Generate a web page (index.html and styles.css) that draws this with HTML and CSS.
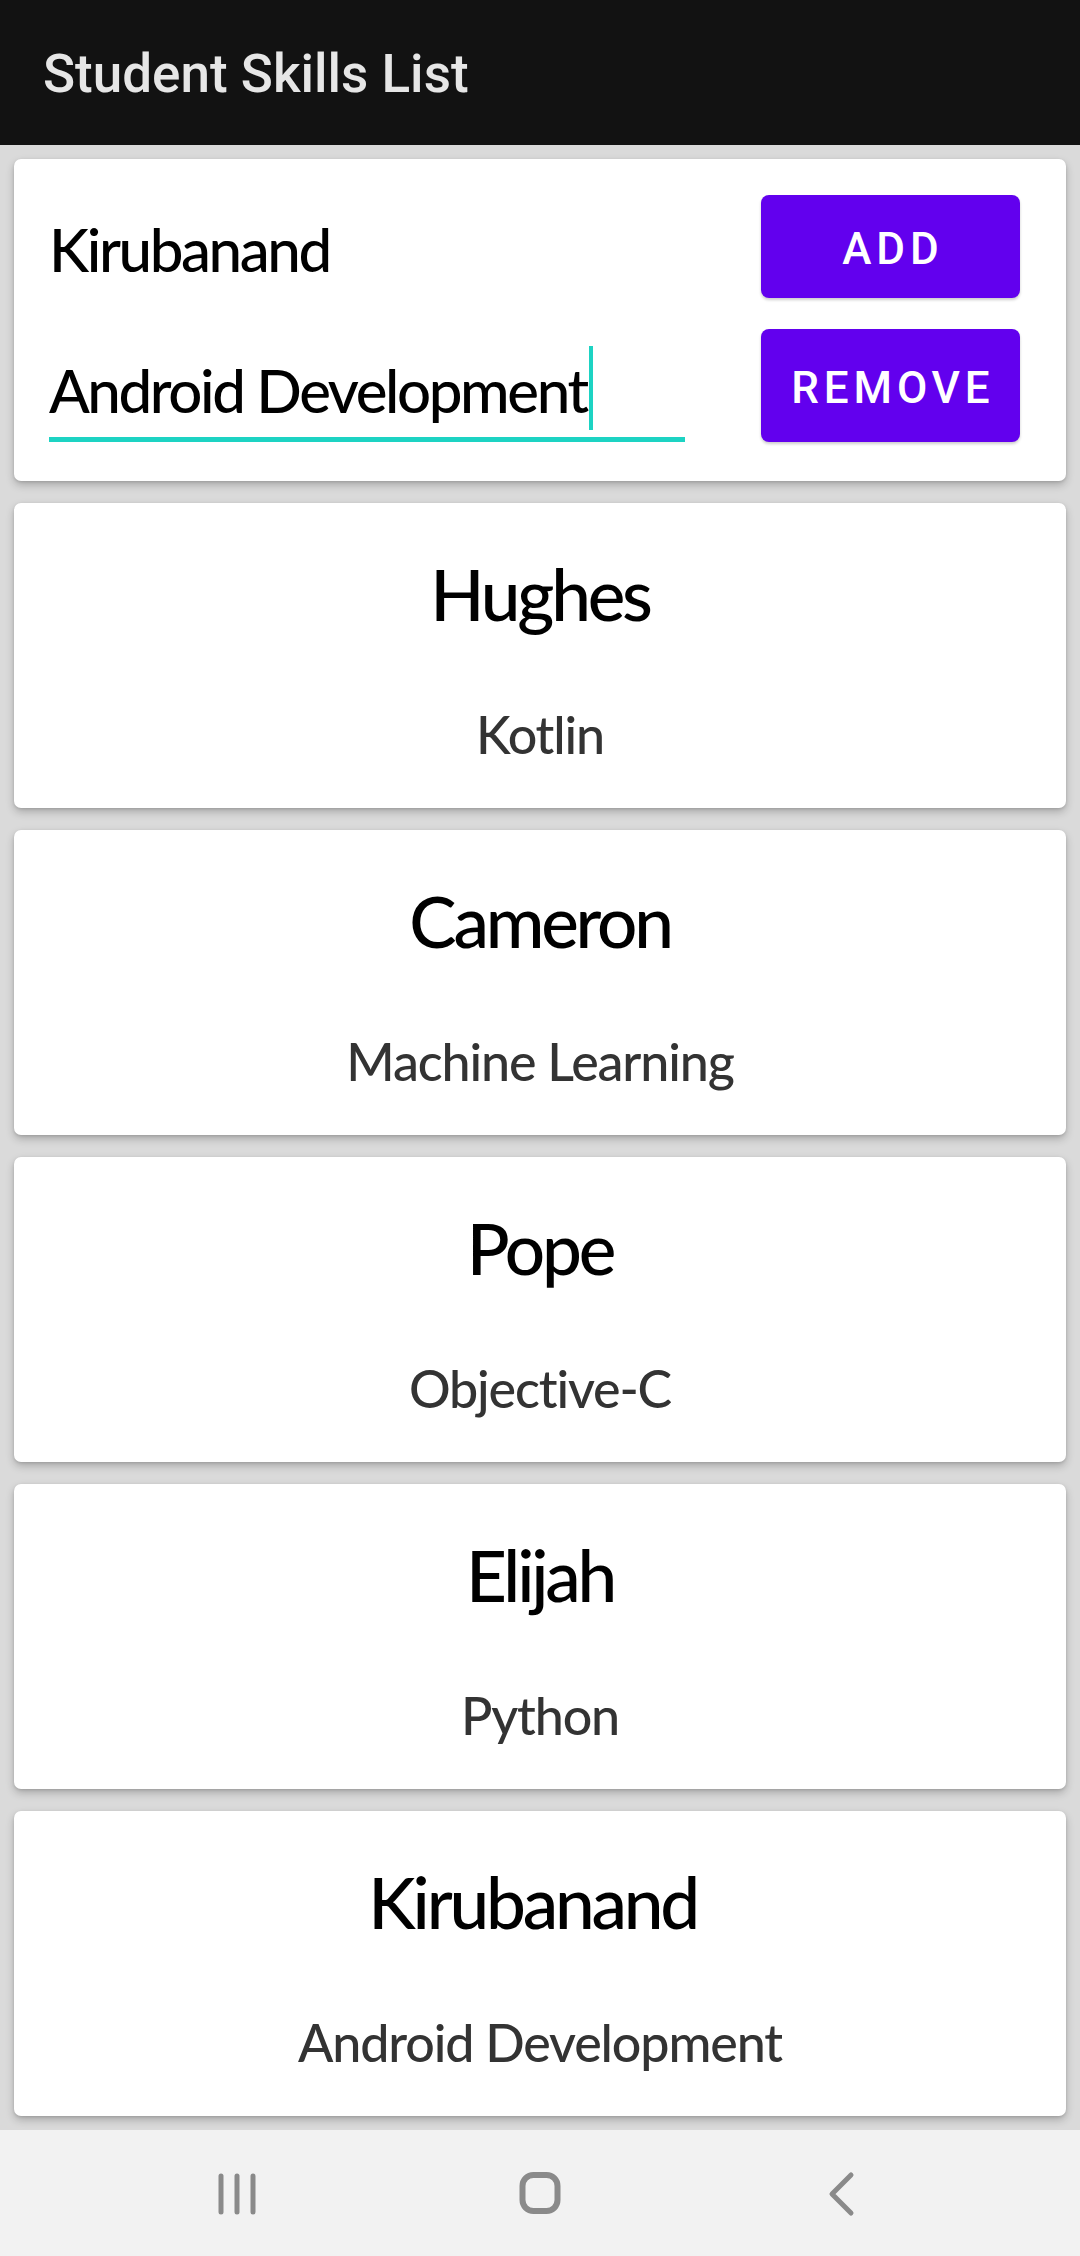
FILE: index.html
```html
<!DOCTYPE html>
<html lang="en">
<head>
<meta charset="utf-8">
<title>Student Skills List</title>
<link rel="stylesheet" href="styles.css">
</head>
<body>
<div class="app">
  <header class="appbar"><h1 class="appbar-title">Student Skills List</h1></header>
  <main class="content">
    <section class="card form-card">
      <div class="form-row row-one">
        <div class="field">Kirubanand</div>
        <button class="btn btn-add">Add</button>
      </div>
      <div class="form-row row-two">
        <div class="field field-focused">Android Development<span class="caret"></span></div>
        <button class="btn btn-remove">Remove</button>
      </div>
    </section>
    <section class="card item-card"><div class="item-name">Hughes</div><div class="item-skill">Kotlin</div></section>
    <section class="card item-card"><div class="item-name">Cameron</div><div class="item-skill">Machine Learning</div></section>
    <section class="card item-card"><div class="item-name">Pope</div><div class="item-skill">Objective-C</div></section>
    <section class="card item-card"><div class="item-name">Elijah</div><div class="item-skill">Python</div></section>
    <section class="card item-card"><div class="item-name">Kirubanand&nbsp;</div><div class="item-skill">Android Development</div></section>
  </main>
  <nav class="navbar">
    <svg class="nav-icon" width="60" height="60" viewBox="0 0 60 60"><g stroke="#8a8a8a" stroke-width="5" stroke-linecap="round"><line x1="13" y1="13" x2="13" y2="49"/><line x1="29" y1="13" x2="29" y2="49"/><line x1="45" y1="13" x2="45" y2="49"/></g></svg>
    <svg class="nav-icon" width="60" height="60" viewBox="0 0 60 60"><rect x="12.5" y="12" width="35" height="36" rx="11" fill="none" stroke="#8a8a8a" stroke-width="6"/></svg>
    <svg class="nav-icon" width="60" height="60" viewBox="0 0 60 60"><polyline points="39,12 20,31 39,50" fill="none" stroke="#8a8a8a" stroke-width="5" stroke-linecap="round" stroke-linejoin="round"/></svg>
  </nav>
</div>
</body>
</html>
```
FILE: styles.css
```css
* { box-sizing: border-box; }
html, body { margin: 0; padding: 0; }
body {
  width: 1080px;
  height: 2256px;
  overflow: hidden;
  background: #dadada;
  font-family: Lato, "Open Sans", sans-serif;
}
.app {
  display: flex;
  flex-direction: column;
  height: 2256px;
}
.appbar {
  height: 145px;
  flex: none;
  background: #121212;
  display: flex;
  align-items: center;
  padding: 4px 0 0 43px;
}
.appbar-title {
  margin: 0;
  font-family: Roboto, "Liberation Sans", sans-serif;
  font-weight: 500;
  font-size: 53px;
  line-height: 1;
  color: #e6e6e6;
}
.content {
  flex: 1;
  display: flex;
  flex-direction: column;
  gap: 22px;
  padding: 14px;
  overflow: hidden;
}
.card {
  flex: none;
  background: #ffffff;
  border-radius: 7px;
  box-shadow: 0 4px 9px rgba(0,0,0,0.22), 0 1px 3px rgba(0,0,0,0.12);
}
.form-card {
  height: 322px;
  padding: 36px 46px 0 35px;
  display: flex;
  flex-direction: column;
  gap: 31px;
}
.form-row {
  display: flex;
  justify-content: space-between;
  align-items: flex-start;
}
.row-one { height: 103px; }
.row-two { height: 113px; }
.field {
  width: 636px;
  font-size: 60px;
  font-weight: 500;
  line-height: 70px;
  letter-spacing: -0.04em;
  color: #000;
  white-space: nowrap;
}
.row-one .field { padding-top: 19px; }
.field-focused {
  height: 113px;
  padding-top: 26px;
  border-bottom: 5px solid #1dd3c3;
}
.caret {
  display: inline-block;
  width: 4px;
  height: 84px;
  margin-top: -24px;
  margin-left: 2px;
  vertical-align: -17px;
  background: #1dd3c3;
}
.btn {
  width: 259px;
  border: none;
  border-radius: 8px;
  background: #6200ee;
  color: #ffffff;
  font-family: Roboto, "Liberation Sans", sans-serif;
  font-weight: 500;
  font-size: 44px;
  letter-spacing: 0.11em;
  text-transform: uppercase;
  padding: 5px 0 0 0.11em;
  box-shadow: 0 2px 3px rgba(0,0,0,0.2);
}
.btn-add { height: 103px; }
.btn-remove { height: 113px; }
.item-card {
  height: 305px;
  padding-top: 48px;
  display: flex;
  flex-direction: column;
  align-items: center;
}
.item-name {
  font-size: 71px;
  font-weight: 500;
  line-height: 86px;
  letter-spacing: -0.045em;
  color: #000;
}
.item-skill {
  margin-top: 65px;
  font-size: 52px;
  font-weight: 500;
  line-height: 64px;
  letter-spacing: -0.022em;
  color: #333333;
}
.navbar {
  height: 126px;
  flex: none;
  background: #f2f2f2;
  display: flex;
  justify-content: center;
  align-items: center;
  gap: 242px;
}
.nav-icon { display: block; }
```
